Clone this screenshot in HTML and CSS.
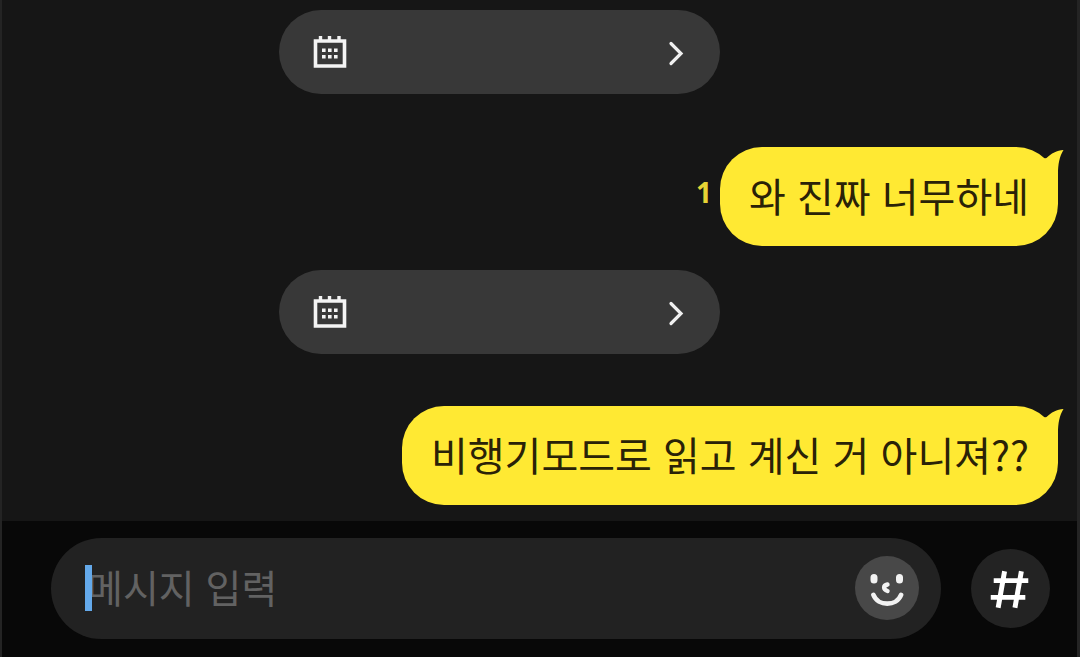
FILE: index.html
```html
<!DOCTYPE html>
<html lang="ko">
<head>
<meta charset="utf-8">
<meta name="viewport" content="width=device-width, initial-scale=1">
<title>채팅</title>
<link rel="stylesheet" href="styles.css">
</head>
<body>
<svg class="sprite" aria-hidden="true">
  <symbol id="calendar" viewBox="0 0 34 34">
    <path d="M2.500 6H31.500V31H2.500Z" fill="none" stroke="#f4f4f4" stroke-width="3.600"/>
    <path d="M7.500 1V6M16.500 1V6M26 1V6" stroke="#f4f4f4" stroke-width="3.400"/>
    <path d="M9 13.500h3.600v3.600H9zM15 13.500h3.600v3.600H15zM21 13.500h3.600v3.600H21zM9 20h3.600v3.600H9zM15 20h3.600v3.600H15zM21 20h3.600v3.600H21z" fill="#f4f4f4"/>
  </symbol>
  <symbol id="chevron" viewBox="0 0 16 28">
    <path d="M3 5.500 13 15.500 3 25.500" fill="none" stroke="#f0f0f0" stroke-width="3.200" stroke-linecap="round"/>
  </symbol>
  <symbol id="tail" viewBox="0 0 24 48">
    <path d="M1 12 5.500 11C10 6.500 16 3.500 22.500 3C18.500 9.500 17 17 17 27V46H1Z" fill="#ffe933"/>
  </symbol>
</svg>
<div class="chat">
  <main class="messages">
    <button class="notice" type="button" aria-label="일정 보기">
      <svg class="calendar"><use href="#calendar"/></svg>
      <svg class="chevron"><use href="#chevron"/></svg>
    </button>
    <div class="row">
      <span class="unread">1</span>
      <p class="bubble">와 진짜 너무하네<svg class="tail" aria-hidden="true"><use href="#tail"/></svg></p>
    </div>
    <button class="notice" type="button" aria-label="일정 보기">
      <svg class="calendar"><use href="#calendar"/></svg>
      <svg class="chevron"><use href="#chevron"/></svg>
    </button>
    <div class="row">
      <p class="bubble">비행기모드로 읽고 계신 거 아니져??<svg class="tail" aria-hidden="true"><use href="#tail"/></svg></p>
    </div>
  </main>
  <form class="composer">
    <div class="field">
      <input class="input" type="text" placeholder="메시지 입력" aria-label="메시지 입력">
      <span class="caret"></span>
      <button class="emoji" type="button" aria-label="이모티콘">
        <svg viewBox="0 0 64 64" fill="none" stroke="#f2f2f2" stroke-linecap="round" aria-hidden="true">
          <path d="M19 21.500V24M44.500 21.500V24" stroke-width="7"/>
          <path d="M32.500 28.500C28 29.500 28 33.500 32.500 35" stroke-width="4.400"/>
          <path d="M18.500 39C23 50.500 41.500 50.500 46 39" stroke-width="4.800"/>
        </svg>
      </button>
    </div>
    <button class="hash" type="button" aria-label="샵검색">
      <svg viewBox="0 0 80 80" fill="none" stroke="#fff" stroke-width="5" aria-hidden="true">
        <path d="M34 22.500 27.500 59.500M51 22.500 44.500 59.500M23 32H58M20 49H55"/>
      </svg>
    </button>
  </form>
</div>
</body>
</html>
```
FILE: styles.css
```css
* {
  box-sizing: border-box;
}

body {
  margin: 0;
  background: #161616;
  font-family: "Noto Sans CJK KR", "Noto Sans", sans-serif;
}

button {
  border: 0;
  padding: 0;
}

svg {
  display: block;
}

.sprite {
  position: absolute;
  width: 0;
  height: 0;
}

.chat {
  display: flex;
  flex-direction: column;
  min-height: 100vh;
  border-left: 2px solid #242424;
  border-right: 3px solid #242424;
}

.messages {
  flex: 1;
  display: flex;
  flex-direction: column;
  padding: 10px 19px 16px;
}

.notice {
  display: flex;
  align-items: center;
  justify-content: space-between;
  align-self: center;
  width: 441px;
  height: 84px;
  margin-right: 80px;
  padding: 0 36px 0 34px;
  border-radius: 42px;
  background: #383838;
}

.calendar {
  width: 34px;
  height: 34px;
}

.chevron {
  width: 16px;
  height: 28px;
}

.row {
  display: flex;
  justify-content: flex-end;
  align-items: center;
  gap: 8px;
  margin: 53px 0 24px;
}

.row:last-child {
  margin: 52px 0 0;
}

.unread {
  margin-bottom: 10px;
  color: #e6d335;
  font: 700 28px/32px "Open Sans", sans-serif;
}

.bubble {
  position: relative;
  margin: 0;
  padding: 18px 29px 21px;
  border-radius: 42px;
  background: #ffe933;
  color: #2a2207;
  font-size: 40px;
  line-height: 60px;
}

.tail {
  position: absolute;
  top: 0;
  right: -7px;
  width: 24px;
  height: 48px;
}

.composer {
  display: flex;
  align-items: center;
  gap: 30px;
  padding: 17px 27px 18px 49px;
  background: #080808;
}

.field {
  position: relative;
  flex: 1;
  display: flex;
  align-items: center;
  min-width: 0;
  padding: 18px 22px 19px 36px;
  border-radius: 51px;
  background: #222;
}

.input {
  flex: 1;
  min-width: 0;
  height: 64px;
  padding: 0 0 4px;
  border: 0;
  outline: 0;
  background: transparent;
  color: #eee;
  font: 39px/60px "Noto Sans CJK KR", sans-serif;
}

.input::placeholder {
  color: #626262;
  opacity: 1;
}

.caret {
  position: absolute;
  top: 27px;
  left: 34px;
  width: 7px;
  height: 46px;
  background: #64a9ea;
}

.emoji {
  width: 64px;
  height: 64px;
  border-radius: 50%;
  background: #484848;
}

.hash {
  width: 79px;
  height: 79px;
  border-radius: 50%;
  background: #232323;
}
```
